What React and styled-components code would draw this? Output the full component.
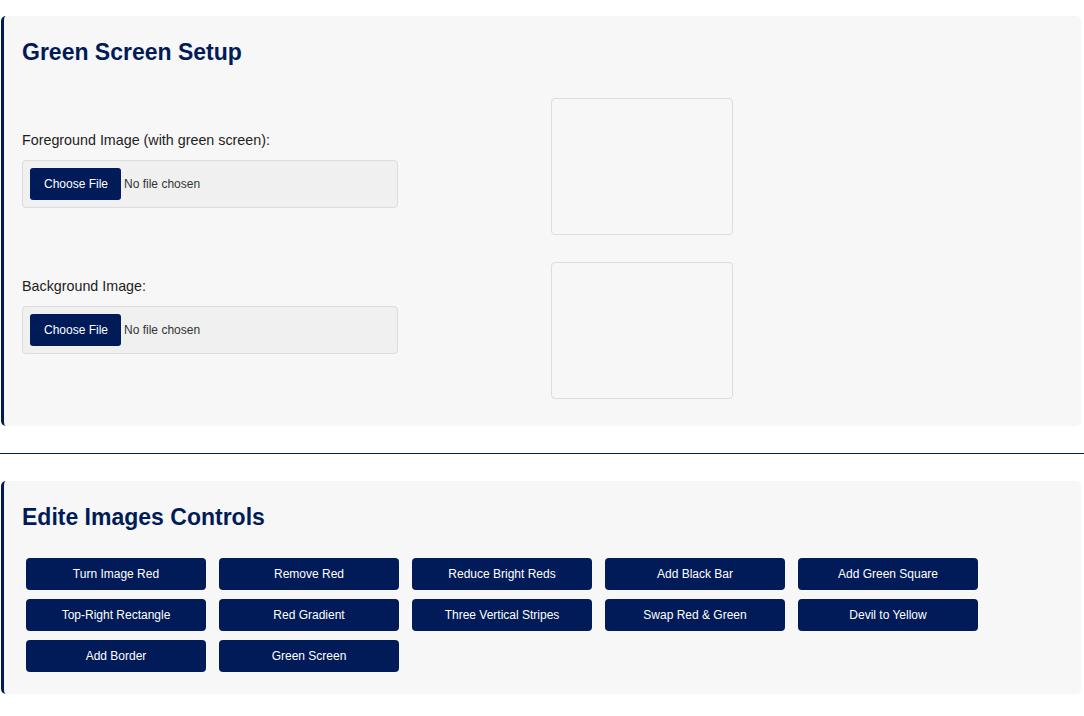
import React from "react";
import styled, { createGlobalStyle } from "styled-components";

const NAVY = "#001b58";

const GlobalStyle = createGlobalStyle`
  body {
    margin: 0;
    background: #ffffff;
    font-family: "Liberation Sans", Arial, sans-serif;
  }
`;

const Page = styled.div`
  padding-top: 16px;
  padding-bottom: 22px;
`;

const Section = styled.section`
  width: 1080px;
  margin-left: 1px;
  box-sizing: border-box;
  background: #f7f7f7;
  border-left: 3px solid ${NAVY};
  border-radius: 5px;
  padding: 23px 21px 22px 18px;
`;

const Title = styled.h2`
  margin: 0;
  font-size: 23px;
  font-weight: 700;
  color: ${NAVY};
`;

const SetupGrid = styled.div`
  display: grid;
  grid-template-columns: 1fr 1fr;
  column-gap: 20px;
  margin-top: 32px;
  margin-bottom: 5px;
`;

const InputsCol = styled.div`
  display: flex;
  flex-direction: column;
  gap: 70px;
  padding-top: 34px;
`;

const Field = styled.div`
  display: flex;
  flex-direction: column;
`;

const Label = styled.label`
  font-size: 14.3px;
  color: #1d1d1d;
  margin-bottom: 12px;
`;

const FileInput = styled.input`
  width: 376px;
  height: 48px;
  box-sizing: border-box;
  padding: 7px;
  background: #f0f0f0;
  border: 1px solid #dcdcdc;
  border-radius: 4px;
  font-family: "Liberation Sans", Arial, sans-serif;
  font-size: 12px;
  color: #333;

  &::file-selector-button {
    height: 32px;
    padding: 0 13px 0 14px;
    margin-right: 3px;
    border: none;
    border-radius: 3px;
    background: ${NAVY};
    color: #fff;
    font-family: "Liberation Sans", Arial, sans-serif;
    font-size: 12px;
    cursor: pointer;
  }
`;

const PreviewCol = styled.div`
  display: flex;
  flex-direction: column;
  gap: 27px;
`;

const Preview = styled.div`
  width: 182px;
  height: 137px;
  box-sizing: border-box;
  border: 1px solid #dddddd;
  border-radius: 4px;
`;

const Divider = styled.hr`
  margin: 27px 0;
  border: none;
  border-top: 1px solid ${NAVY};
`;

const ButtonGrid = styled.div`
  display: flex;
  flex-wrap: wrap;
  column-gap: 13px;
  row-gap: 9px;
  margin: 27px 0 0 4px;
  width: 980px;
`;

const ActionButton = styled.button`
  width: 180px;
  height: 32px;
  border: none;
  border-radius: 4px;
  background: ${NAVY};
  color: #ffffff;
  font-family: "Liberation Sans", Arial, sans-serif;
  font-size: 12px;
  cursor: pointer;
`;

const actions = [
  "Turn Image Red",
  "Remove Red",
  "Reduce Bright Reds",
  "Add Black Bar",
  "Add Green Square",
  "Top-Right Rectangle",
  "Red Gradient",
  "Three Vertical Stripes",
  "Swap Red & Green",
  "Devil to Yellow",
  "Add Border",
  "Green Screen",
];

export default function App() {
  return (
    <Page>
      <GlobalStyle />
      <Section>
        <Title>Green Screen Setup</Title>
        <SetupGrid>
          <InputsCol>
            <Field>
              <Label htmlFor="fg">Foreground Image (with green screen):</Label>
              <FileInput id="fg" type="file" accept="image/*" />
            </Field>
            <Field>
              <Label htmlFor="bg">Background Image:</Label>
              <FileInput id="bg" type="file" accept="image/*" />
            </Field>
          </InputsCol>
          <PreviewCol>
            <Preview />
            <Preview />
          </PreviewCol>
        </SetupGrid>
      </Section>
      <Divider />
      <Section>
        <Title>Edite Images Controls</Title>
        <ButtonGrid>
          {actions.map((a) => (
            <ActionButton key={a}>{a}</ActionButton>
          ))}
        </ButtonGrid>
      </Section>
    </Page>
  );
}
